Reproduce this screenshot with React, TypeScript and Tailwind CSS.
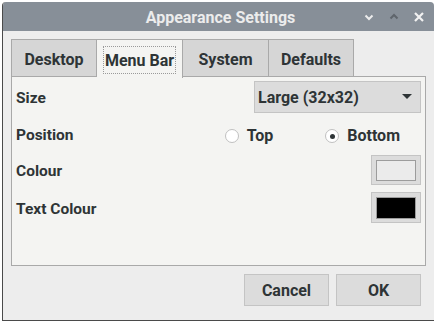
import React from "react";

const font = { fontFamily: "Roboto, 'Noto Sans', sans-serif" };

export default function App() {
  return (
    <div className="w-[434px] h-[321px] bg-white relative" style={font}>
      <div className="absolute left-[2px] top-[2px] w-[432px] h-[319px] flex flex-col bg-[#ededed] rounded-t-[4px] overflow-hidden border-l border-b border-[#4a4a4a]">
        {/* title bar */}
        <div className="h-[29px] bg-[#878f98] flex items-center relative shrink-0">
          <div className="absolute inset-0 flex items-center justify-center text-[16px] font-bold text-[#ececec] pl-[4px] pt-[2px]">
            Appearance Settings
          </div>
          <div className="ml-auto flex items-center gap-[13px] pr-[9px] relative">
            <svg width="12" height="12" viewBox="0 0 12 12">
              <path d="M2.5 4.5 L6 8 L9.5 4.5" stroke="#ececec" strokeWidth="2" fill="none" />
            </svg>
            <svg width="12" height="12" viewBox="0 0 12 12">
              <path d="M2.5 7.5 L6 4 L9.5 7.5" stroke="#5f656c" strokeWidth="2" fill="none" />
            </svg>
            <svg width="12" height="12" viewBox="0 0 12 12">
              <path d="M2 2 L10 10 M10 2 L2 10" stroke="#f2f2f2" strokeWidth="2.2" fill="none" />
            </svg>
          </div>
        </div>
        {/* body */}
        <div className="flex-1 flex flex-col px-[8px] pt-[8px]">
          {/* tabs */}
          <div className="flex h-[38px] relative z-10">
            <div className="w-[86px] h-[38px] flex items-center justify-center bg-[#d6d6d6] border border-[#a9a9a9] text-[16px] font-bold text-[#2e3436] pt-[4px]">
              Desktop
            </div>
            <div className="w-[86px] h-[39px] flex items-center justify-center bg-[#f4f4f2] border border-[#a9a9a9] border-b-0 border-l-0 text-[16px] font-bold text-[#2e3436] pt-[1px]">
              <span className="border border-dotted border-[#9a9a9a] w-[73px] h-[28px] flex items-center justify-center pt-[2px]">Menu Bar</span>
            </div>
            <div className="w-[86px] h-[38px] flex items-center justify-center bg-[#d6d6d6] border border-[#a9a9a9] border-l-0 text-[16px] font-bold text-[#2e3436] pt-[4px]">
              System
            </div>
            <div className="w-[85px] h-[38px] flex items-center justify-center bg-[#d6d6d6] border border-[#a9a9a9] border-l-0 text-[16px] font-bold text-[#2e3436] pt-[4px]">
              Defaults
            </div>
          </div>
          {/* panel */}
          <div className="h-[190px] bg-[#f4f4f2] border border-[#a9a9a9] -mt-px flex flex-col px-[4px] pt-[4px] text-[15.5px] font-bold text-[#2e3436]">
            <div className="flex items-center h-[32px]">
              <span className="pt-[4px]">Size</span>
              <div className="ml-auto w-[167px] h-[32px] bg-[#dcdcdc] border border-[#c4c4c4] flex items-center pl-[3px] pr-[8px]">
                <span className="text-[16px] pt-[2px]">Large (32x32)</span>
                <svg className="ml-auto" width="10" height="6" viewBox="0 0 10 6">
                  <path d="M0 0 L10 0 L5 5 Z" fill="#2e3436" />
                </svg>
              </div>
            </div>
            <div className="flex items-center h-[32px] mt-[5px] pt-[4px]">
              <span>Position</span>
              <div className="ml-auto flex items-center mr-[21px]">
                <span className="w-[14px] h-[14px] rounded-full border border-[#c0c0c0] bg-white mr-[8px]" />
                <span className="text-[16px]">Top</span>
                <span className="w-[14px] h-[14px] rounded-full border border-[#c0c0c0] bg-white ml-[52px] mr-[8px] flex items-center justify-center">
                  <span className="w-[5px] h-[5px] rounded-full bg-[#2e3436]" />
                </span>
                <span className="text-[16px]">Bottom</span>
              </div>
            </div>
            <div className="flex items-center h-[30px] mt-[5px]">
              <span className="pt-[4px]">Colour</span>
              <div className="ml-auto w-[50px] h-[30px] bg-[#dcdcdc] border border-[#c4c4c4] flex items-center justify-center">
                <div className="w-[40px] h-[21px] bg-[#ebebeb] border border-[#9c9c9c]" />
              </div>
            </div>
            <div className="flex items-center h-[31px] mt-[7px]">
              <span className="pt-[4px]">Text Colour</span>
              <div className="ml-auto w-[50px] h-[31px] bg-[#dcdcdc] border border-[#c4c4c4] flex items-center justify-center">
                <div className="w-[40px] h-[22px] bg-black border border-[#9c9c9c]" />
              </div>
            </div>
          </div>
          {/* buttons */}
          <div className="flex justify-end gap-[7px] mt-[8px] pr-[5px]">
            <div className="w-[85px] h-[32px] bg-[#dcdcdc] border border-[#c4c4c4] flex items-center justify-center text-[16px] font-bold text-[#2e3436] pt-[2px]">
              Cancel
            </div>
            <div className="w-[85px] h-[32px] bg-[#dcdcdc] border border-[#c4c4c4] flex items-center justify-center text-[16px] font-bold text-[#2e3436] pt-[2px]">
              OK
            </div>
          </div>
        </div>
      </div>
    </div>
  );
}
